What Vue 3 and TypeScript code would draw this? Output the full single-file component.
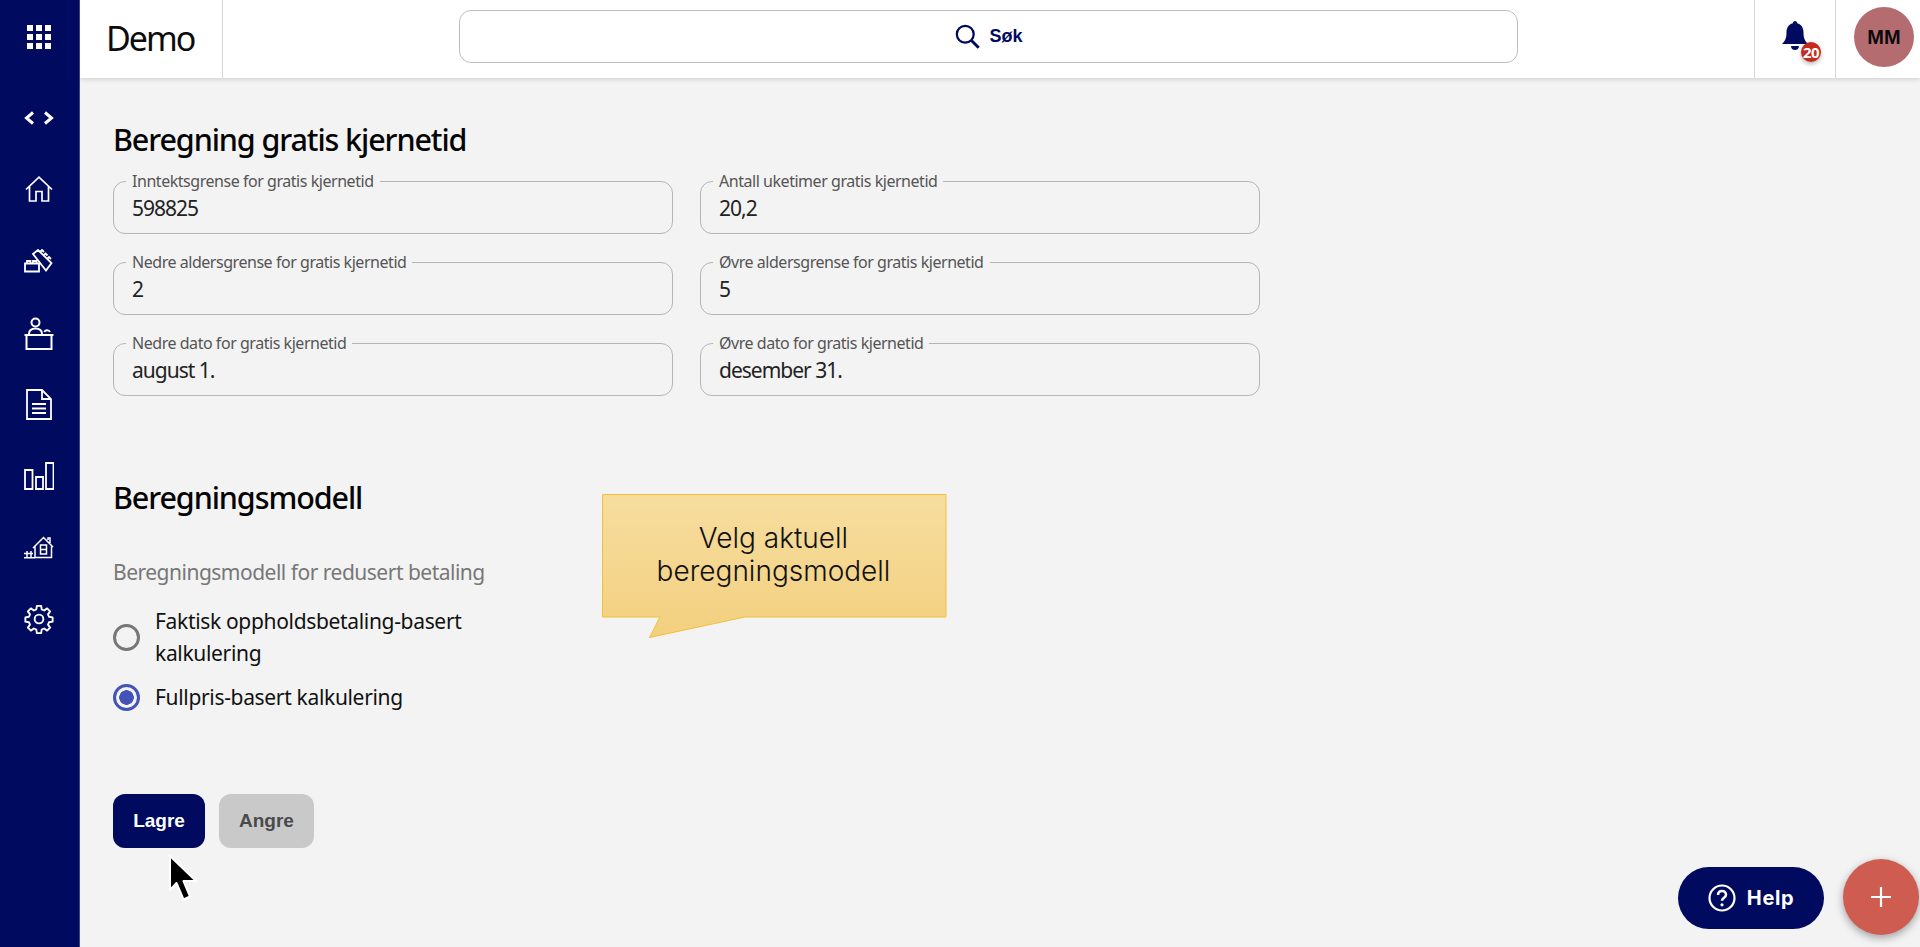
<script setup lang="ts">
interface Field { label: string; value: string }
const fields: Field[] = [
  { label: 'Inntektsgrense for gratis kjernetid', value: '598825' },
  { label: 'Antall uketimer gratis kjernetid', value: '20,2' },
  { label: 'Nedre aldersgrense for gratis kjernetid', value: '2' },
  { label: 'Øvre aldersgrense for gratis kjernetid', value: '5' },
  { label: 'Nedre dato for gratis kjernetid', value: 'august 1.' },
  { label: 'Øvre dato for gratis kjernetid', value: 'desember 31.' },
]
const gridDots: number[][] = []
for (let r = 0; r < 3; r++) for (let c = 0; c < 3; c++) gridDots.push([c * 9, r * 9])
</script>

<template>
  <div class="app">
    <aside class="sidebar">
      <div class="side-top">
        <svg width="24" height="24" viewBox="0 0 24 24" fill="#fff"><rect v-for="(d, i) in gridDots" :key="i" :x="d[0]" :y="d[1]" width="6" height="6" /></svg>
      </div>
      <nav class="side-nav">
        <div class="side-item">
          <svg width="30" height="14" viewBox="0 0 30 14" fill="none" stroke="#fff" stroke-width="3"><path d="M9 1.500 2.500 7 9 12.500M21 1.500 27.500 7 21 12.500" /></svg>
        </div>
        <div class="side-item">
          <svg width="28" height="26" viewBox="0 0 28 26" fill="none" stroke="#fff" stroke-width="1.700"><path d="M1 13.500 14 1.200 27 13.500M4.500 10.500V25H11V15.500H17V25H23.500V10.500" /></svg>
        </div>
        <div class="side-item">
          <svg width="30" height="24" viewBox="0 0 30 24" fill="none" stroke="#fff" stroke-width="1.800"><path d="M1 14.500h14v8H1zM3 14.500v-2.500h3.500v2.500M9 14.500v-2.500h3.500v2.500" /><path d="M9 5 14 1 27.500 14 22 21.500z" /><path d="M16.500 2.500l1.500-1.500 2 2M20 6l1.500-1.500 2 2M23.500 9.500l1.500-1.500 2 2" /></svg>
        </div>
        <div class="side-item">
          <svg width="30" height="36" viewBox="0 0 30 36" fill="none" stroke="#fff" stroke-width="2"><circle cx="11.500" cy="7.500" r="4" /><path d="M5 19c0-4 2.500-5.500 6.500-5.500S18 15 18 19M.5 20h29M2.500 20V34H27.500V20M20.500 17c.5-2.500 4.500-2.500 5.500 0" /></svg>
        </div>
        <div class="side-item">
          <svg width="26" height="31" viewBox="0 0 26 31" fill="none" stroke="#fff" stroke-width="1.800"><path d="M1 1h15l9 9v20H1zM16 1v9h9M6 15h14M6 19.500h14M6 24h14" /></svg>
        </div>
        <div class="side-item">
          <svg width="30" height="28" viewBox="0 0 30 28" fill="none" stroke="#fff" stroke-width="1.800"><path d="M1 8h7.500v19H1zM12 15h7v12h-7zM22 1h7.500v26H22z" /></svg>
        </div>
        <div class="side-item">
          <svg width="30" height="23" viewBox="0 0 30 23" fill="none" stroke="#fff" stroke-width="1.500"><path d="M9 12 19.500 1.500 29 11M11 10.500V21.500H27.500V10.500M24 4V2h2v5M16.500 9h6v9h-6zM16.500 13.500h6M0 21.800h11M0 17.500h9M3 15v7M7 15v7" /></svg>
        </div>
        <div class="side-item">
          <svg width="30" height="30" viewBox="0 0 24 24" fill="none" stroke="#fff" stroke-width="1.500" stroke-linejoin="round"><circle cx="12" cy="12" r="3.500" /><path d="M10.300 1.500h3.400l.5 2.900 1.900.8 2.400-1.700 2.400 2.400-1.700 2.400.8 1.900 2.900.5v3.400l-2.900.5-.8 1.900 1.700 2.400-2.400 2.400-2.400-1.700-1.900.8-.5 2.900h-3.400l-.5-2.900-1.900-.8-2.400 1.700-2.400-2.400 1.700-2.400-.8-1.900-2.900-.5v-3.400l2.900-.5.8-1.900-1.700-2.400 2.400-2.400 2.400 1.700 1.900-.8z" /></svg>
        </div>
      </nav>
    </aside>

    <div class="main">
      <header class="topbar">
        <div class="brand">Demo</div>
        <div class="search-wrap">
          <div class="search">
            <svg width="27" height="27" viewBox="0 0 24 24" fill="none" stroke="#000a5e" stroke-width="2"><circle cx="10" cy="10" r="7.500" /><path d="m15.500 15.500 6.500 6.500" stroke-width="2.600" /></svg>
            <span>Søk</span>
          </div>
        </div>
        <div class="bell-cell">
          <svg class="bell" width="26" height="32" viewBox="0 0 26 32" fill="#000a5e"><path d="M13 0c1.300 0 2.200 1 2.200 2.300 4.300 1.100 6.300 4.800 6.300 9.200 0 5 1 8 4.500 11.500H0C3.500 19.500 4.500 16.500 4.500 11.500c0-4.400 2-8.100 6.300-9.200C10.800 1 11.700 0 13 0z" /><path d="M9 25h8c0 2.500-1.700 4-4 4s-4-1.500-4-4z" /></svg>
          <span class="badge">20</span>
        </div>
        <div class="avatar-cell"><div class="avatar">MM</div></div>
      </header>

      <main class="content">
        <h1 class="title">Beregning gratis kjernetid</h1>
        <div class="fields">
          <fieldset v-for="f in fields" :key="f.label" class="field">
            <legend>{{ f.label }}</legend>
            <div class="value">{{ f.value }}</div>
          </fieldset>
        </div>

        <h2 class="title model-title">Beregningsmodell</h2>
        <div class="radio-label">Beregningsmodell for redusert betaling</div>
        <div class="radio-row first">
          <span class="radio"></span>
          <span class="radio-text">Faktisk oppholdsbetaling-basert kalkulering</span>
        </div>
        <div class="radio-row checked">
          <span class="radio"></span>
          <span class="radio-text">Fullpris-basert kalkulering</span>
        </div>
        <div class="actions">
          <button class="btn primary">Lagre</button>
          <button class="btn muted">Angre</button>
        </div>

        <div class="callout">
          <svg class="callout-bg" width="345" height="145" viewBox="0 0 345 145">
            <defs>
              <linearGradient id="cg" x1="0" y1="0" x2="0" y2="1">
                <stop offset="0" stop-color="#f6dd9f" />
                <stop offset="1" stop-color="#f3d07f" />
              </linearGradient>
            </defs>
            <path d="M.5.500h343.500v122.500H143L47.500 143.500 58 123H.5z" fill="url(#cg)" stroke="#f2c038" />
          </svg>
          <div class="callout-text">Velg aktuell beregningsmodell</div>
        </div>

        <svg class="cursor" width="32" height="48" viewBox="0 0 32 48"><path d="M2 2V36L8.500 29 15.500 45.500 22 42.500 15.500 27H28Z" fill="#000" stroke="#fff" stroke-width="2" stroke-linejoin="round" /></svg>
      </main>
    </div>

    <button class="help">
      <svg width="28" height="28" viewBox="0 0 28 28" fill="none" stroke="#fff" stroke-width="2.200"><circle cx="14" cy="14" r="12.500" /><path d="M10 11c0-2.500 1.800-4 4-4s4 1.500 4 3.700c0 3-4 3-4 6" stroke-width="2.600" /><circle cx="14" cy="20.800" r="1.600" fill="#fff" stroke="none" /></svg>
      <span>Help</span>
    </button>
    <button class="fab" aria-label="Legg til">
      <svg width="20" height="20" viewBox="0 0 20 20" stroke="#fff" stroke-width="2.200"><path d="M10 0v20M0 10h20" /></svg>
    </button>
  </div>
</template>

<style>
html, body { margin: 0; background: #f3f3f3; }
</style>

<style scoped>
.app {
  position: relative;
  display: flex;
  height: 947px;
  overflow: hidden;
  background: #f3f3f3;
  font-family: "Noto Sans", sans-serif;
  color: #111;
}
.sidebar {
  width: 80px;
  flex: none;
  box-sizing: border-box;
  padding-right: 2px;
  background: #000a5e;
  box-shadow: inset -1px 0 0 #3c4585;
  display: flex;
  flex-direction: column;
  align-items: center;
}
.side-top {
  height: 73px;
  display: flex;
  align-items: center;
  justify-content: center;
  width: 100%;
}
.side-nav { margin-top: 9px; display: flex; flex-direction: column; width: 100%; }
.side-item { height: 71.6px; display: flex; align-items: center; justify-content: center; }
.main { flex: 1; min-width: 0; display: flex; flex-direction: column; }
.topbar {
  height: 78px;
  flex: none;
  display: flex;
  background: #fff;
  box-shadow: 0 2px 4px rgba(0, 0, 0, .12);
  position: relative;
}
.brand {
  width: 143px;
  box-sizing: border-box;
  padding-left: 26px;
  border-right: 1px solid #d6d6d6;
  font-size: 34px;
  letter-spacing: -2px;
  line-height: 76px;
  color: #0c0c0c;
}
.search-wrap { flex: 1; padding: 10px 236px 0 236px; box-sizing: border-box; min-width: 0; }
.search {
  height: 53px;
  box-sizing: border-box;
  border: 1px solid #bdbdbd;
  border-radius: 12px;
  display: flex;
  align-items: center;
  justify-content: center;
  gap: 8px;
  font-family: "Liberation Sans", sans-serif;
  font-weight: 700;
  font-size: 18px;
  color: #000a5e;
}
.bell-cell {
  width: 81px;
  box-sizing: border-box;
  border-left: 1px solid #d6d6d6;
  position: relative;
}
.bell { position: absolute; left: 27px; top: 21px; }
.badge {
  position: absolute;
  left: 46px;
  top: 42px;
  width: 20px;
  height: 20px;
  border-radius: 50%;
  background: #c62a1a;
  color: #fff;
  font-weight: 700;
  font-size: 15px;
  letter-spacing: -.5px;
  line-height: 20px;
  text-align: center;
  box-shadow: 0 2px 4px rgba(0, 0, 0, .3);
}
.avatar-cell {
  width: 85px;
  box-sizing: border-box;
  border-left: 1px solid #d6d6d6;
  padding: 7px 0 0 18px;
}
.avatar {
  width: 60px;
  height: 60px;
  border-radius: 50%;
  background: #b56c71;
  color: #0a0a0a;
  font-family: "Liberation Sans", sans-serif;
  font-weight: 700;
  font-size: 20px;
  line-height: 60px;
  text-align: center;
}
.content { position: relative; flex: 1; padding: 0 33px; }
.title {
  margin: 0;
  font-size: 30.500px;
  font-weight: 500;
  letter-spacing: -1.100px;
  color: #050505;
  line-height: 40px;
  padding-top: 41px;
}
.fields {
  display: grid;
  grid-template-columns: 560px 560px;
  column-gap: 27px;
  row-gap: 19px;
  margin-top: 13px;
}
.field {
  margin: 0;
  padding: 0 18px;
  height: 62px;
  box-sizing: border-box;
  border: 1px solid #b5b5b5;
  border-radius: 12px;
}
.field legend {
  padding: 0 6px;
  margin-left: -6px;
  font-size: 16px;
  letter-spacing: -.46px;
  line-height: 18px;
  color: #555;
}
.value { font-size: 21px; letter-spacing: -1px; line-height: 28px; color: #222; margin-top: 4px; }
.model-title { padding-top: 81px; }
.radio-label { margin-top: 41px; font-size: 21px; letter-spacing: -.5px; line-height: 28px; color: #777; }
.radio-row { display: flex; align-items: center; gap: 15px; width: 370px; margin-top: 12px; }
.radio-row.first { margin-top: 19px; }
.radio {
  flex: none;
  width: 27px;
  height: 27px;
  box-sizing: border-box;
  border: 3px solid #777;
  border-radius: 50%;
}
.checked .radio {
  border-color: #4453b8;
  background: radial-gradient(circle, #4453b8 0 7px, transparent 7.500px);
}
.radio-text { font-size: 21px; letter-spacing: -.33px; line-height: 32px; color: #111; }
.actions { display: flex; gap: 14px; margin-top: 81px; }
.btn {
  height: 54px;
  border: 0;
  border-radius: 12px;
  font-family: "Liberation Sans", sans-serif;
  font-weight: 700;
  font-size: 19px;
}
.primary { width: 92px; background: #000a5e; color: #fff; }
.muted { width: 95px; background: #c9c9c9; color: #4a4a4a; }
.callout { position: absolute; left: 522px; top: 416px; width: 345px; height: 145px; }
.callout-bg { position: absolute; left: 0; top: 0; }
.callout-text {
  position: relative;
  width: 280px;
  margin: 0 auto;
  padding: 28px 2px 0 0;
  text-align: center;
  font-family: "Inter", sans-serif;
  font-weight: 300;
  font-size: 28px;
  line-height: 33px;
  color: #111;
}
.cursor { position: absolute; left: 88px; top: 776px; }
.help {
  position: absolute;
  left: 1678px;
  top: 867px;
  width: 146px;
  height: 62px;
  border: 0;
  border-radius: 31px;
  background: #000a5e;
  color: #fff;
  display: flex;
  align-items: center;
  justify-content: center;
  gap: 11px;
  font-family: "Inter", sans-serif;
  font-weight: 700;
  font-size: 20px;
  letter-spacing: .6px;
}
.fab {
  position: absolute;
  left: 1843px;
  top: 859px;
  width: 76px;
  height: 76px;
  border: 0;
  padding: 0;
  border-radius: 50%;
  background: #cf5c50;
  display: flex;
  align-items: center;
  justify-content: center;
  box-shadow: 0 3px 8px rgba(0, 0, 0, .35);
}
</style>
